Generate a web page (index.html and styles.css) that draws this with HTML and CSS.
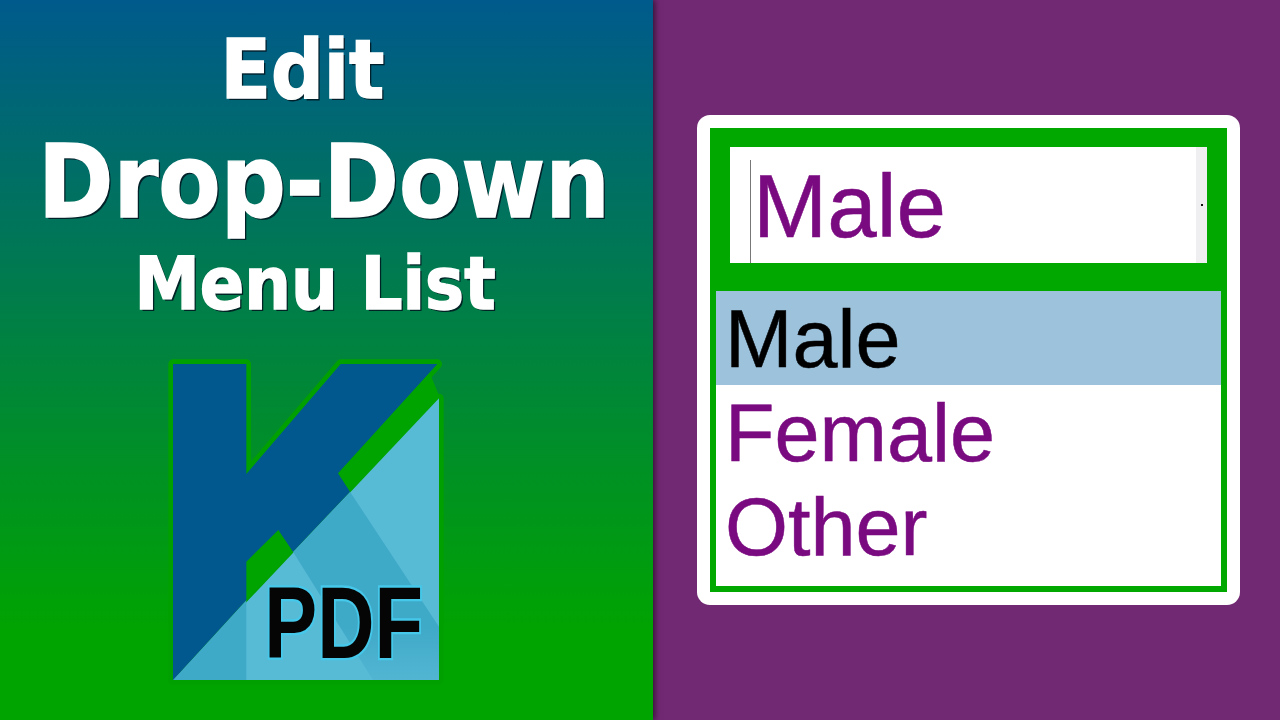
FILE: index.html
```html
<!DOCTYPE html>
<html lang="en">
<head>
<meta charset="utf-8">
<title>Edit Drop-Down Menu List</title>
<link rel="stylesheet" href="styles.css">
</head>
<body>
<main class="thumb">
  <section class="left">
    <h1 class="title">
      <span class="t-edit">Edit</span>
      <span class="t-drop">Drop-Down</span>
      <span class="t-menu">Menu List</span>
    </h1>
    <svg class="logo" viewBox="0 0 930 1050" width="310" height="350" aria-label="Kofax PDF logo">
      <defs>
        <linearGradient id="fade" x1="0" y1="0" x2="0" y2="1">
          <stop class="fade-a" offset="0"/>
          <stop class="fade-a" offset=".72"/>
          <stop class="fade-b" offset="1"/>
        </linearGradient>
      </defs>
      <polygon class="k-outline" points="72,72 292,72 292,402 575,72 865,72 567,400 603,455 432,635 388,570 292,665 292,780 72,1020"/>
      <polygon class="tri-outline" points="870,175 72,1020 870,1020"/>
      <polygon class="k-gap" points="567,400 842,98 872,172 603,455"/>
      <polygon class="tri" points="870,175 72,1020 870,1020"/>
      <polygon class="tri-dark" points="603,455 432,635 672,1020 870,1020 870,860"/>
      <polygon class="tri-left" points="292,780 72,1020 292,1020"/>
      <polygon class="k-gap" points="388,570 432,635 292,780 292,665"/>
      <polygon class="k-blue" points="72,72 292,72 292,402 575,72 865,72 567,400 603,455 432,635 388,570 292,665 292,780 72,1020"/>
      <text class="pdf" transform="translate(346 955) scale(.78 1)">PDF</text>
    </svg>
  </section>
  <section class="right">
    <div class="card">
      <div class="frame">
        <div class="field-wrap">
          <div class="field">
            <div class="value"><span class="caret-text">Male</span></div>
            <div class="scroll"><i class="dot"></i></div>
          </div>
        </div>
        <ul class="list">
          <li class="item selected">Male</li>
          <li class="item">Female</li>
          <li class="item">Other</li>
        </ul>
      </div>
    </div>
  </section>
</main>
</body>
</html>
```
FILE: styles.css
```css
* { box-sizing: border-box; }
html, body { margin: 0; padding: 0; }
body { width: 1280px; height: 720px; overflow: hidden; font-family: "Liberation Sans", Arial, sans-serif; }

.thumb { display: flex; width: 1280px; height: 720px; background: #722973; }

.left {
  position: relative;
  width: 653px;
  flex: none;
  display: flex;
  flex-direction: column;
  align-items: center;
  background: linear-gradient(180deg, #005a8c 0, #00a400 88%, #00a400 100%);
  box-shadow: 2px 0 6px rgba(0, 0, 0, .55);
  z-index: 1;
}
.title {
  margin: 0;
  padding-top: 22px;
  display: flex;
  flex-direction: column;
  align-items: center;
  color: #fff;
  font-family: "DejaVu Sans Condensed", "DejaVu Sans", sans-serif;
  font-weight: 700;
  -webkit-text-stroke: 1.4px #fff;
  text-shadow: 2px 2px 0 rgba(0, 20, 30, .85);
}
.title span { display: block; }
.t-edit { font-size: 82px; line-height: 96px; margin-left: -48px; }
.t-drop { font-size: 101px; line-height: 116px; margin: 6px 0 0 -5px; }
.t-menu { font-size: 73px; line-height: 88px; margin-left: -23px; }

.logo { display: block; margin: 12px 0 0 -46px; }
.k-outline, .tri-outline {
  fill: #00a000;
  stroke: #00a000;
  stroke-width: 28px;
  stroke-linejoin: round;
}
.tri { fill: #57bbd6; }
.tri-dark { fill: url(#fade); }
.fade-a { stop-color: #3fa9c8; }
.fade-b { stop-color: #52b6d2; }
.tri-left { fill: #3fa9c8; }
.k-blue { fill: #00588f; }
.k-gap { fill: #00a400; }
.pdf {
  font-family: "Liberation Sans", Arial, sans-serif;
  font-weight: 700;
  font-size: 305px;
  fill: #050505;
  stroke: #45c8ea;
  stroke-width: 14px;
  paint-order: stroke;
}

.right { flex: 1; padding: 115px 40px 0 44px; }
.card { background: #fff; border-radius: 13px; padding: 13px; height: 490px; }
.frame {
  height: 464px;
  background: #00a800;
  padding: 19px 6px 6px;
  display: flex;
  flex-direction: column;
}
.field-wrap { padding: 0 14px 28px; flex: none; }
.field { display: flex; height: 116px; background: #fff; }
.value { flex: 1; padding: 13px 0 0 20px; }
.caret-text {
  display: block;
  height: 103px;
  border-left: 1px solid #777;
  padding-left: 2px;
  color: #7a0a80;
  font-size: 89px;
  line-height: 92px;
  -webkit-text-stroke: .5px #7a0a80;
}
.scroll { width: 11px; background: #efeff1; display: flex; align-items: center; justify-content: center; }
.dot { width: 2px; height: 2px; background: #111; }

.list { list-style: none; margin: 0; padding: 0; flex: 1; background: #fff; }
.item { height: 94px; padding: 2px 0 0 9px; font-size: 81px; line-height: 92px; color: #7a0a80; -webkit-text-stroke: .5px currentColor; }
.selected { background: #9cc2dc; color: #000; }
```
